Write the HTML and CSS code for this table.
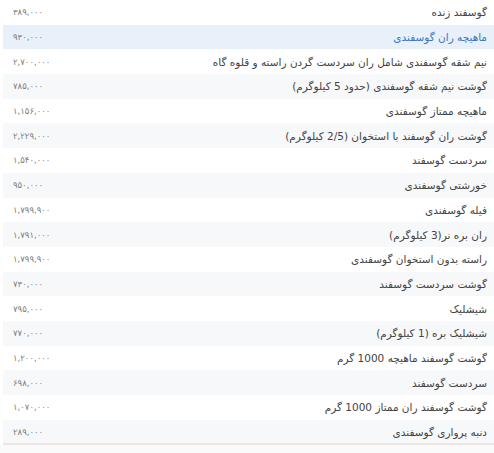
FILE: index.html
```html
<!DOCTYPE html>
<html lang="fa" dir="rtl">
<head>
<meta charset="utf-8">
<title>قیمت گوشت گوسفندی</title>
<link rel="stylesheet" href="styles.css">
</head>
<body>
<div class="wrap">
<table class="prices">
<tbody>
<tr><td class="name">گوسفند زنده</td><td class="price">۳۸۹,۰۰۰</td></tr>
<tr class="active"><td class="name">ماهیچه ران گوسفندی</td><td class="price">۹۳۰,۰۰۰</td></tr>
<tr><td class="name">نیم شقه گوسفندی شامل ران سردست گردن راسته و قلوه گاه</td><td class="price">۲,۷۰۰,۰۰۰</td></tr>
<tr><td class="name">گوشت نیم شقه گوسفندی (حدود 5 کیلوگرم)</td><td class="price">۷۸۵,۰۰۰</td></tr>
<tr><td class="name">ماهیچه ممتاز گوسفندی</td><td class="price">۱,۱۵۶,۰۰۰</td></tr>
<tr><td class="name">گوشت ران گوسفند با استخوان (2/5 کیلوگرم)</td><td class="price">۲,۲۲۹,۰۰۰</td></tr>
<tr><td class="name">سردست گوسفند</td><td class="price">۱,۵۴۰,۰۰۰</td></tr>
<tr><td class="name">خورشتی گوسفندی</td><td class="price">۹۵۰,۰۰۰</td></tr>
<tr><td class="name">فیله گوسفندی</td><td class="price">۱,۷۹۹,۹۰۰</td></tr>
<tr><td class="name">ران بره نر(3 کیلوگرم)</td><td class="price">۱,۷۹۱,۰۰۰</td></tr>
<tr><td class="name">راسته بدون استخوان گوسفندی</td><td class="price">۱,۷۹۹,۹۰۰</td></tr>
<tr><td class="name">گوشت سردست گوسفند</td><td class="price">۷۳۰,۰۰۰</td></tr>
<tr><td class="name">شیشلیک</td><td class="price">۷۹۵,۰۰۰</td></tr>
<tr><td class="name">شیشلیک بره (1 کیلوگرم)</td><td class="price">۷۷۰,۰۰۰</td></tr>
<tr><td class="name">گوشت گوسفند ماهیچه 1000 گرم</td><td class="price">۱,۲۰۰,۰۰۰</td></tr>
<tr><td class="name">سردست گوسفند</td><td class="price">۶۹۸,۰۰۰</td></tr>
<tr><td class="name">گوشت گوسفند ران ممتاز 1000 گرم</td><td class="price">۱,۰۷۰,۰۰۰</td></tr>
<tr><td class="name">دنبه پرواری گوسفندی</td><td class="price">۲۸۹,۰۰۰</td></tr>
</tbody>
</table>
</div>
</body>
</html>
```

FILE: styles.css
```css
html, body {
  margin: 0;
  padding: 0;
  background: #fafafa;
}
body {
  font-family: "DejaVu Sans", "Noto Sans", sans-serif;
}
.wrap {
  padding-left: 3px;
  background: #ffffff;
}
.prices {
  width: 100%;
  border-collapse: collapse;
  border-bottom: 2px solid #ebe6e2;
}
.prices tr {
  height: 24.7px;
  background: #ffffff;
}
.prices tr:nth-child(even) {
  background: #f7f8fa;
}
.prices tr.active {
  background: #e8f0fa;
}
.prices td {
  padding: 0;
  vertical-align: middle;
  white-space: nowrap;
}
.name {
  text-align: right;
  padding-right: 7px !important;
  font-size: 10.5px;
  color: #444444;
}
.price {
  text-align: left;
  padding-left: 10px !important;
  font-size: 8.5px;
  color: #808080;
  width: 120px;
}
.active .name {
  color: #3a76c4;
}
```
